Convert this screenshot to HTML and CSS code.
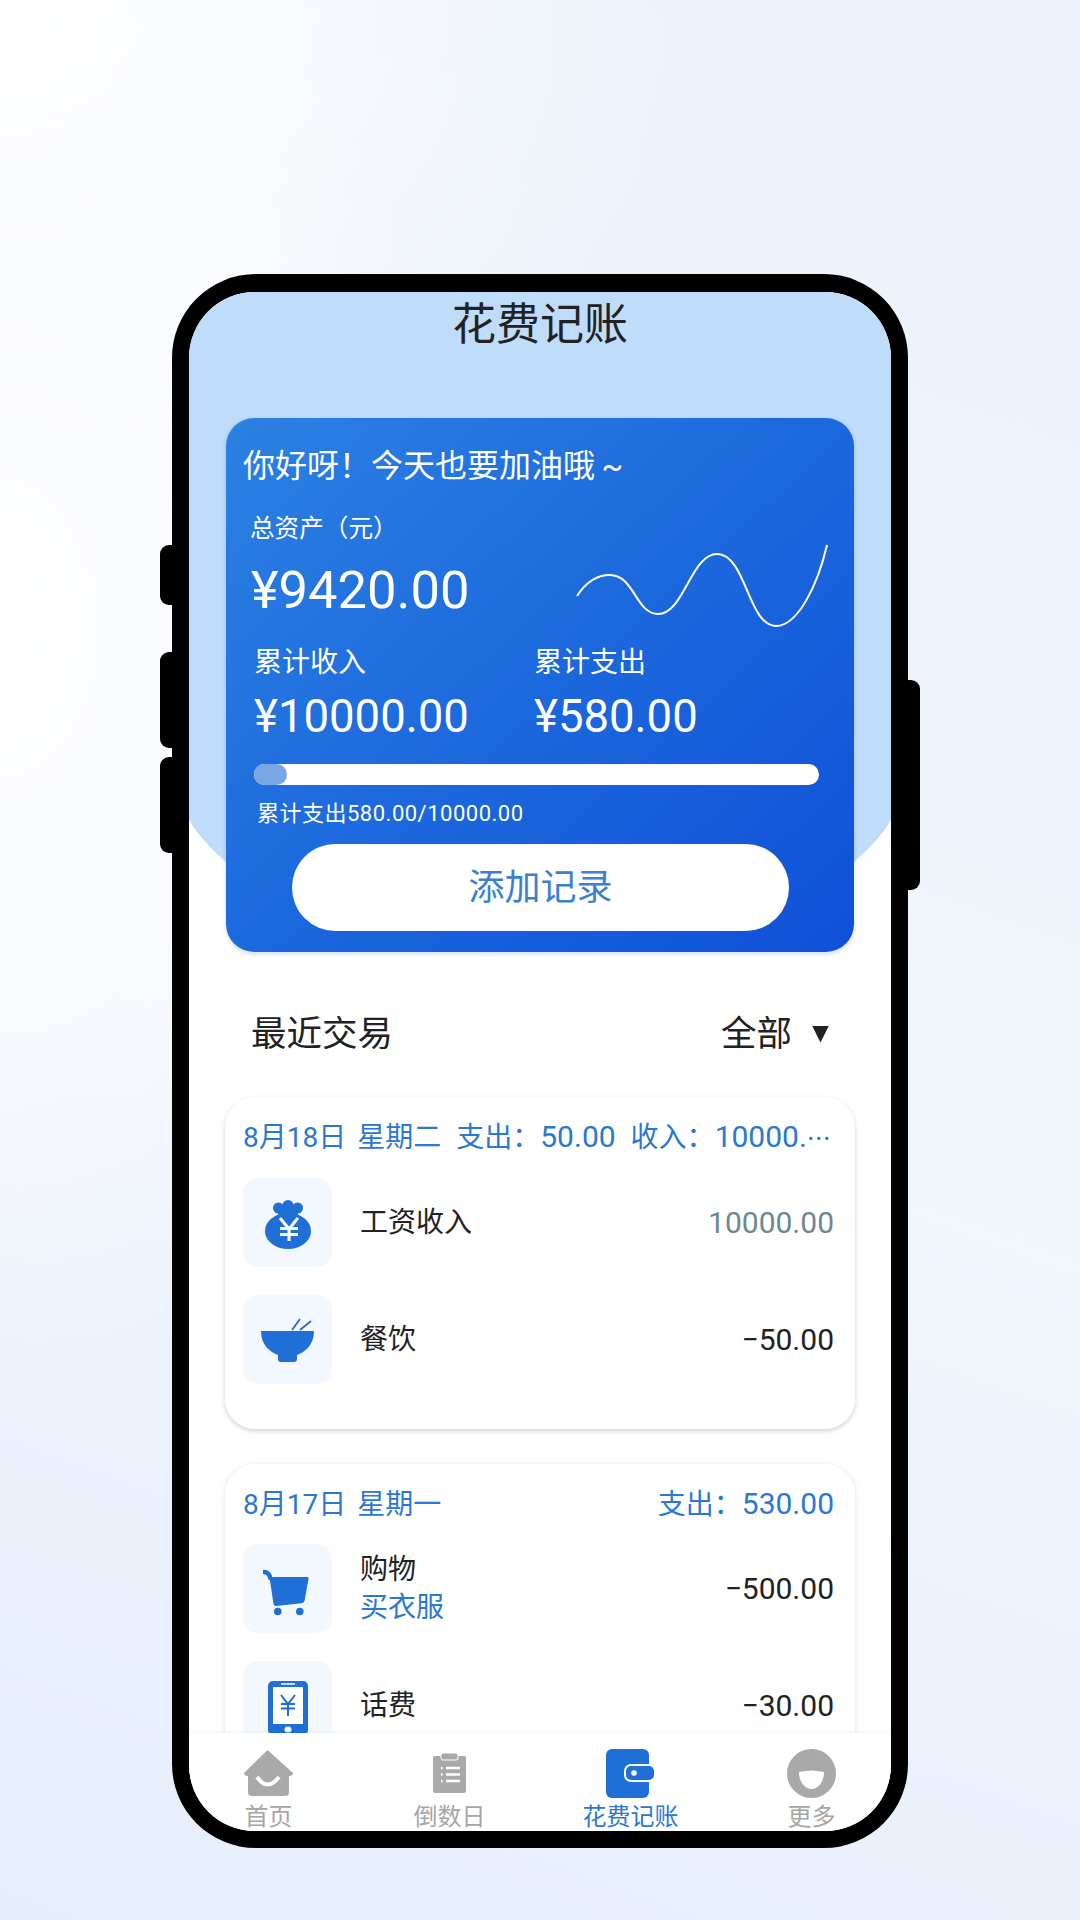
FILE: index.html
```html
<!DOCTYPE html>
<html lang="zh-CN">
<head>
<meta charset="utf-8">
<title>花费记账</title>
<link rel="stylesheet" href="styles.css">
</head>
<body>
<div class="phone">
  <span class="side-btn btn-a"></span>
  <span class="side-btn btn-b"></span>
  <span class="side-btn btn-c"></span>
  <span class="side-btn btn-power"></span>
  <div class="screen">
    <main class="main">
      <div class="dome"></div>
      <h1 class="title">花费记账</h1>
      <section class="hero">
        <p class="greeting">你好呀！今天也要加油哦&#8201;~</p>
        <p class="asset-label">总资产（元）</p>
        <div class="asset-row">
          <span class="asset-value">¥9420.00</span>
          <svg class="wave" viewBox="0 0 252 84" width="252" height="84" aria-hidden="true">
            <path d="M1 52C10 38 22 31 34 31C58 31 60 70 82 70C108 70 115 10 141 10C170 10 172 82 200 82C222 82 242 40 251 1" fill="none" stroke="#fff" stroke-width="2"/>
          </svg>
        </div>
        <div class="stats">
          <div class="stat">
            <span class="stat-label">累计收入</span>
            <span class="stat-value">¥10000.00</span>
          </div>
          <div class="stat">
            <span class="stat-label">累计支出</span>
            <span class="stat-value">¥580.00</span>
          </div>
        </div>
        <div class="progress"><div class="progress-fill"></div></div>
        <p class="progress-note">累计支出580.00/10000.00</p>
        <div class="add-btn">添加记录</div>
      </section>

      <div class="section-head">
        <span>最近交易</span>
        <span class="filter">全部<i class="caret"></i></span>
      </div>

      <section class="day-card day-card-first">
        <div class="day-head">
          <span>8月18日</span>
          <span class="day-week">星期二</span>
          <span class="day-sum">支出：<span class="num">50.00</span></span>
          <span class="day-sum">收入：<span class="num">10000.</span><span class="dots">⋯</span></span>
        </div>
        <div class="tx">
          <div class="tile">
            <svg width="46" height="53" viewBox="0 -4 46 53" aria-hidden="true">
              <circle class="ic" cx="13.500" cy="8" r="5.500"/>
              <circle class="ic" cx="23" cy="5.500" r="5.500"/>
              <circle class="ic" cx="32.500" cy="8" r="5.500"/>
              <ellipse class="ic" cx="23" cy="31" rx="23" ry="18"/>
              <rect class="ic" x="13" y="6" width="20" height="10"/>
              <path d="M15 18l9 11l9-11M15 28.500h18M15 34.500h18M24 29v12" fill="none" stroke="#fff" stroke-width="3"/>
            </svg>
          </div>
          <div class="tx-body"><span>工资收入</span></div>
          <span class="tx-amount tx-income">10000.00</span>
        </div>
        <div class="tx">
          <div class="tile">
            <svg width="53" height="44" viewBox="0 0 53 44" aria-hidden="true">
              <path class="ic" d="M0 13H53C53 27 44 34 36 37V41Q36 44 33 44H20Q17 44 17 41V37C9 34 0 27 0 13Z"/>
              <path d="M31 12L39 1M39 12L50 3" fill="none" stroke="#2b70cf" stroke-width="2"/>
            </svg>
          </div>
          <div class="tx-body"><span>餐饮</span></div>
          <span class="tx-amount">−50.00</span>
        </div>
      </section>

      <section class="day-card">
        <div class="day-head day-head-split">
          <span>8月17日<span class="day-week">星期一</span></span>
          <span>支出：<span class="num">530.00</span></span>
        </div>
        <div class="tx">
          <div class="tile">
            <svg width="50" height="54" viewBox="2.500 -7 50 54" aria-hidden="true">
              <path d="M3.500 3Q8.500 3 9.800 9" fill="none" stroke="#1f6fd6" stroke-width="4.500" stroke-linecap="round"/>
              <path class="ic" d="M9 8H47Q48.500 8 48 10L44 32Q43.500 34 41 34.300L15.500 37Q13.500 37 13 35Z"/>
              <circle class="ic" cx="17.300" cy="42.500" r="3.800"/>
              <circle class="ic" cx="39.300" cy="42.500" r="3.800"/>
            </svg>
          </div>
          <div class="tx-body"><span>购物</span><span class="tx-note">买衣服</span></div>
          <span class="tx-amount">−500.00</span>
        </div>
        <div class="tx">
          <div class="tile tile-top">
            <svg width="40" height="54" viewBox="0 0 40 54" aria-hidden="true">
              <rect class="ic" width="40" height="54" rx="5"/>
              <rect x="5" y="6" width="30" height="37" fill="#fff"/>
              <path d="M13 3h14" stroke="#fff" stroke-width="1.500"/>
              <ellipse cx="20" cy="48.500" rx="3.500" ry="3" fill="#fff"/>
              <path d="M13 14l7 9l7-9M13 23h14M13 27.500h14M20 23v12" fill="none" stroke="#1f6fd6" stroke-width="2"/>
            </svg>
          </div>
          <div class="tx-body"><span>话费</span></div>
          <span class="tx-amount">−30.00</span>
        </div>
      </section>
    </main>

    <nav class="tabbar">
      <div class="tab">
        <span class="tab-icon">
          <svg width="49" height="46" viewBox="0 0 49 46" aria-hidden="true">
            <path class="ic-gray" d="M23.500 0L49 23Q49 26 45 26V42Q45 46 41 46H8Q4 46 4 42V26Q0 26 0 23Z"/>
            <path d="M13 27Q23.500 42 35 27" fill="none" stroke="#fff" stroke-width="4"/>
          </svg>
        </span>
        <span class="tab-label">首页</span>
      </div>
      <div class="tab">
        <span class="tab-icon">
          <svg width="33" height="40" viewBox="0 0 33 40" aria-hidden="true">
            <rect class="ic-gray" y="3" width="33" height="37" rx="2"/>
            <rect class="ic-gray" x="8" y="0" width="17" height="7" rx="2" stroke="#fff" stroke-width="1"/>
            <path d="M8 15h1.500M13 15h14M8 21.500h1.500M13 21.500h14M8 28h1.500M13 28h14" stroke="#fff" stroke-width="2.500"/>
          </svg>
        </span>
        <span class="tab-label">倒数日</span>
      </div>
      <div class="tab tab-active">
        <span class="tab-icon">
          <svg width="50" height="49" viewBox="0 0 50 49" aria-hidden="true">
            <rect class="ic" width="43" height="49" rx="6"/>
            <rect class="ic" x="19" y="16" width="30" height="16" rx="6" stroke="#fff" stroke-width="2"/>
            <circle cx="28" cy="24" r="2.800" fill="#fff"/>
          </svg>
        </span>
        <span class="tab-label">花费记账</span>
      </div>
      <div class="tab">
        <span class="tab-icon">
          <svg width="49" height="49" viewBox="0 0 49 49" aria-hidden="true">
            <circle class="ic-gray" cx="24.500" cy="24.500" r="24.500"/>
            <path d="M12 23Q24.500 20 37 23C37 33 31 40 24.500 40C18 40 12 33 12 23Z" fill="#fff"/>
          </svg>
        </span>
        <span class="tab-label">更多</span>
      </div>
    </nav>
  </div>
</div>
</body>
</html>
```
FILE: styles.css
```css
* { box-sizing: border-box; }

html, body { margin: 0; height: 100%; }

body {
  width: 1080px;
  height: 1920px;
  overflow: hidden;
  padding-top: 274px;
  font-family: Roboto, "Noto Sans CJK SC", sans-serif;
  color: #222;
  background:
    radial-gradient(ellipse 700px 520px at 0 0, #ffffff 0%, rgba(255,255,255,0) 100%),
    radial-gradient(ellipse 480px 760px at 0 620px, #ffffff 0%, rgba(255,255,255,0) 100%),
    linear-gradient(200deg, #ebf2fb 0%, #f2f6fd 55%, #e5eefb 100%);
}

p, h1 { margin: 0; font-weight: 400; }

.phone {
  position: relative;
  width: 736px;
  height: 1574px;
  margin-left: 172px;
  border: solid #000;
  border-width: 18px 17px 17px;
  border-radius: 84px;
  background: #000;
}

.side-btn { position: absolute; background: #000; }
.btn-a, .btn-b, .btn-c { left: -29px; width: 13px; border-radius: 9px 0 0 9px; }
.btn-a { top: 253px; height: 60px; }
.btn-b { top: 360px; height: 96px; }
.btn-c { top: 465px; height: 96px; }
.btn-power { right: -29px; top: 388px; width: 13px; height: 210px; border-radius: 0 9px 9px 0; }

.screen {
  position: relative;
  display: flex;
  flex-direction: column;
  height: 100%;
  overflow: hidden;
  border-radius: 66px;
  background: #fff;
}

.main {
  position: relative;
  flex: 1;
  min-height: 0;
  overflow: hidden;
}

.dome {
  position: absolute;
  top: 0;
  left: -14px;
  width: 730px;
  height: 657px;
  border-radius: 0 0 365px 365px / 0 0 178px 178px;
  background: #bfdcfb;
}

.title {
  position: relative;
  padding-top: 3px;
  height: 126px;
  font-size: 44px;
  line-height: 60px;
  text-align: center;
  color: #222;
}

.hero {
  position: relative;
  height: 534px;
  margin: 0 37px;
  padding: 28px 0 0 17px;
  border-radius: 28px;
  color: #fff;
  background: linear-gradient(138deg, #2c81e2 0%, #1c68dd 50%, #0f50d8 100%);
  box-shadow: 0 2px 5px rgba(40, 90, 170, .22);
}

.greeting { font-size: 32px; line-height: 40px; }

.asset-label {
  margin: 27px 0 0 7px;
  font-size: 24.600px;
  line-height: 32px;
}

.asset-row {
  display: flex;
  align-items: flex-start;
  justify-content: space-between;
  height: 60px;
  margin: 15px 0 0 8px;
  padding-right: 26px;
}

.asset-value { font-size: 52.500px; line-height: 60px; }

.wave { flex: none; margin-top: -16px; }

.stats {
  display: flex;
  gap: 68px;
  margin: 25px 0 0 11px;
}

.stat {
  display: flex;
  flex-direction: column;
  width: 212px;
}

.stat-label { font-size: 28px; line-height: 36px; }
.stat-value { margin-top: 11px; font-size: 45.500px; line-height: 50px; }

.progress {
  width: 565px;
  height: 21px;
  margin: 22px 0 0 11px;
  border-radius: 11px;
  background: #fff;
}

.progress-fill {
  width: 33px;
  height: 100%;
  border-radius: 11px;
  background: #7ba6e4;
}

.progress-note {
  margin: 15px 0 0 14px;
  font-size: 22px;
  line-height: 28px;
  letter-spacing: .5px;
}

.add-btn {
  width: 497px;
  height: 87px;
  margin: 16px 0 0 49px;
  border-radius: 44px;
  font-size: 36px;
  line-height: 89px;
  text-align: center;
  color: #3a80d2;
  background: #fff;
}

.section-head {
  position: relative;
  display: flex;
  justify-content: space-between;
  height: 50px;
  margin: 57px 0 38px;
  padding: 0 62px 0 62px;
  font-size: 35.500px;
  line-height: 50px;
  color: #222;
}

.filter { display: flex; align-items: center; }

.caret {
  width: 17px;
  height: 17px;
  margin-left: 20px;
  background: #222;
  clip-path: polygon(0 0, 100% 0, 50% 100%);
}

.day-card {
  margin: 0 36px;
  padding: 21px 21px 43px 18px;
  border-radius: 30px;
  background: #fff;
  box-shadow: 0 1px 5px rgba(0, 0, 0, .14);
}

.day-card-first {
  margin-bottom: 35px;
  padding-bottom: 45px;
  box-shadow: 0 2px 5px rgba(0, 0, 0, .18);
}

.day-head {
  display: flex;
  align-items: baseline;
  margin-bottom: 21px;
  font-size: 28px;
  line-height: 38px;
  white-space: nowrap;
  color: #2a78d2;
}

.day-head-split {
  justify-content: space-between;
  margin-bottom: 20px;
}

.day-week { margin-left: 11px; }
.day-sum { margin-left: 15px; }
.num { font-size: 30px; }
.dots { font-family: "Noto Sans CJK SC", sans-serif; font-size: 24px; }

.tx {
  display: flex;
  align-items: center;
  gap: 28px;
  margin-bottom: 28px;
}

.tx:last-child { margin-bottom: 0; }

.tile {
  display: flex;
  flex: none;
  align-items: center;
  justify-content: center;
  width: 89px;
  height: 89px;
  border-radius: 15px;
  background: #f3f8fe;
}

.tile-top { align-items: flex-start; padding-top: 20px; }

.ic { fill: #1f6fd6; }
.ic-gray { fill: #a9a9a9; }

.tx-body {
  display: flex;
  flex: 1;
  flex-direction: column;
  padding-top: 1px;
  font-size: 28px;
  line-height: 38px;
  color: #222;
}

.tx-note { color: #2a78d2; }

.tx-amount { font-size: 30px; line-height: 38px; color: #222; }
.tx-income { color: #6f8791; }

.tabbar {
  display: grid;
  flex: none;
  grid-template-columns: repeat(4, 181px);
  justify-content: center;
  height: 98px;
  padding-top: 15px;
  background: #fff;
  box-shadow: 0 -1px 2px rgba(30, 80, 160, .07);
  position: relative;
}

.tab {
  display: flex;
  flex-direction: column;
  align-items: center;
  color: #a6a6a6;
}

.tab-active { color: #2a78d2; }

.tab-icon {
  display: flex;
  align-items: center;
  justify-content: center;
  height: 50px;
}

.tab-label {
  margin-top: 5px;
  font-size: 24px;
  line-height: 28px;
}
```
